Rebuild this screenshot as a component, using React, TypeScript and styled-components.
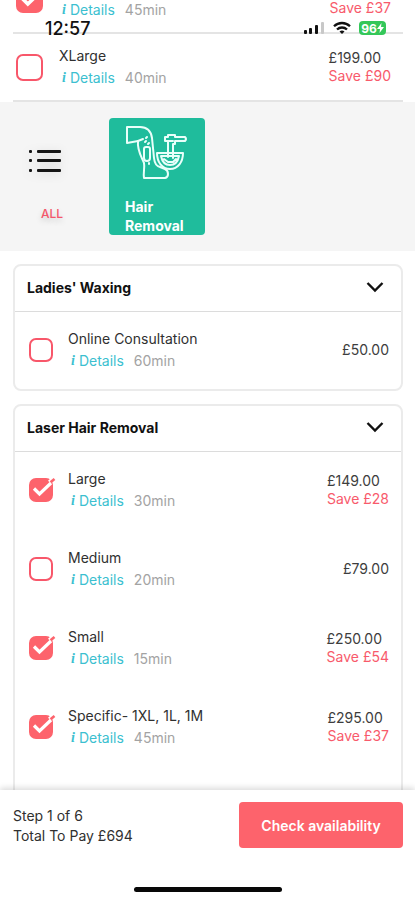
import React, { useState } from "react";
import styled, { createGlobalStyle } from "styled-components";

const coral = "#fd636c";
const line = "#e4e4e4";

const GlobalStyle = createGlobalStyle`
  * { box-sizing: border-box; }
  body {
    margin: 0;
    background: #fff;
    color: #2b2b2b;
    font-family: Inter, "Noto Sans", sans-serif;
    font-size: 14px;
  }
  button, input { font: inherit; margin: 0; }
`;

const Shell = styled.div`
  position: relative;
  display: flex;
  flex-direction: column;
  height: 100vh;
  overflow: hidden;
`;

const StatusBar = styled.div`
  position: absolute;
  z-index: 2;
  top: 18px;
  left: 0;
  right: 0;
  display: flex;
  justify-content: space-between;
  align-items: center;
  height: 20px;
  padding: 0 29px 0 45px;
  color: #111;
  pointer-events: none;
`;

const Clock = styled.time`
  font-size: 18px;
  font-weight: 500;
`;

const Indicators = styled.div`
  display: flex;
  align-items: center;
  gap: 8px;
  svg { display: block; }
`;

const Battery = styled.span`
  display: flex;
  align-items: center;
  justify-content: center;
  width: 27px;
  height: 14px;
  border-radius: 4px;
  background: #34c759;
  color: #fff;
  font-size: 12px;
  font-weight: 700;
`;

const Scroller = styled.main`
  flex: 1;
  min-height: 0;
  overflow-y: auto;
  scrollbar-width: none;
`;

const TopList = styled.ul`
  list-style: none;
  margin: -34px 0 0;
  padding: 0 0 0 13px;
`;

const TopItem = styled.li`
  margin-right: 12px;
  border-bottom: 2px solid ${line};
`;

const ServiceRow = styled.div<{ $inset?: boolean }>`
  display: flex;
  align-items: center;
  min-height: ${(p) => (p.$inset ? 79 : 66)}px;
  padding: ${(p) => (p.$inset ? "0 14px 3px 16px" : "0 12px 0 3px")};
`;

const Tick = styled.span<{ $size: number }>`
  display: grid;
  flex: none;
  width: ${(p) => p.$size}px;
  height: ${(p) => p.$size}px;
  svg, input { grid-area: 1 / 1; width: 100%; height: 100%; }
  svg { pointer-events: none; overflow: visible; }
`;

const TickInput = styled.input`
  appearance: none;
  border: 2px solid #f8576a;
  border-radius: 7px;
  background: #fff;
  cursor: pointer;
  &:checked { background: ${coral}; border-color: ${coral}; }
`;

const Info = styled.div<{ $inset?: boolean }>`
  flex: 1;
  margin-left: ${(p) => (p.$inset ? 15 : 16)}px;
`;

const Name = styled.label`
  display: block;
  line-height: 22px;
  color: #303030;
`;

const Meta = styled.div`
  display: flex;
  gap: 10px;
  padding-left: 3px;
  line-height: 22px;
  color: #a3a3a3;
`;

const Details = styled.a`
  display: flex;
  gap: 4px;
  color: #3cbfd0;
  text-decoration: none;
  i { font: italic 700 14px/22px "Liberation Serif", serif; }
`;

const Cost = styled.div`
  line-height: 18px;
  color: #3d3d3d;
`;

const Saving = styled.div`
  color: #f85a6b;
`;

const Categories = styled.nav`
  display: flex;
  align-items: center;
  gap: 44px;
  height: 149px;
  padding: 0 26px;
  background: #f5f5f5;
`;

const AllButton = styled.button`
  display: flex;
  flex-direction: column;
  align-items: center;
  gap: 32px;
  width: 39px;
  padding: 18px 0 0;
  border: 0;
  background: none;
  color: #f4566b;
  font-size: 12px;
  font-weight: 500;
  line-height: 18px;
  white-space: nowrap;
  svg { display: block; filter: drop-shadow(0 2px 5px rgba(0, 0, 0, 0.14)); }
  span { margin-left: 13px; text-shadow: 0 3px 6px rgba(0, 0, 0, 0.2); }
`;

const CategoryTile = styled.button`
  display: flex;
  flex-direction: column;
  justify-content: space-between;
  align-items: flex-start;
  width: 96px;
  height: 117px;
  padding: 7px 8px 0 16px;
  border: 0;
  border-radius: 4px;
  background: #1fbc9c;
  color: #fff;
  font-weight: 700;
  line-height: 19px;
  text-align: left;
`;

const Groups = styled.div`
  display: flex;
  flex-direction: column;
  gap: 13px;
  padding: 13px 12px 24px 13px;
`;

const Group = styled.section`
  border: 2px solid #ebebeb;
  border-radius: 8px;
`;

const GroupHeader = styled.button`
  display: flex;
  justify-content: space-between;
  align-items: center;
  width: 100%;
  height: 46px;
  padding: 0 17px 3px 12px;
  border: 0;
  border-bottom: 1px solid #dcdcdc;
  background: none;
  color: #111;
  font-weight: 700;
`;

const GroupBody = styled.div<{ $extended?: boolean }>`
  margin: 0 -2px -2px;
  padding-bottom: ${(p) => (p.$extended ? 32 : 0)}px;
`;

const Footer = styled.footer`
  position: relative;
  flex: none;
  padding: 12px 12px 8px 13px;
  background: #fff;
  box-shadow: 0 -2px 6px rgba(0, 0, 0, 0.15);
`;

const FooterRow = styled.div`
  display: flex;
  align-items: center;
  justify-content: space-between;
`;

const Summary = styled.div`
  padding-top: 2px;
  line-height: 20px;
  color: #303030;
`;

const CheckButton = styled.button`
  width: 164px;
  height: 46px;
  border: 0;
  border-radius: 4px;
  background: ${coral};
  color: #fff;
  font-weight: 600;
`;

const HomeIndicator = styled.div`
  width: 148px;
  height: 5px;
  margin: 39px auto 0;
  border-radius: 3px;
  background: #080808;
`;

type Service = { id: string; name: string; time: string; price: string; save?: string; on?: boolean };

const topServices: Service[] = [
  { id: "top-specific", name: "Specific- 1XL, 1L, 1M", time: "45min", price: "£295.00", save: "Save £37", on: true },
  { id: "top-xlarge", name: "XLarge", time: "40min", price: "£199.00", save: "Save £90" },
];

const groups: { title: string; services: Service[]; extended?: boolean }[] = [
  { title: "Ladies' Waxing", services: [{ id: "consult", name: "Online Consultation", time: "60min", price: "£50.00" }] },
  {
    title: "Laser Hair Removal",
    extended: true,
    services: [
      { id: "large", name: "Large", time: "30min", price: "£149.00", save: "Save £28", on: true },
      { id: "medium", name: "Medium", time: "20min", price: "£79.00" },
      { id: "small", name: "Small", time: "15min", price: "£250.00", save: "Save £54", on: true },
      { id: "specific", name: "Specific- 1XL, 1L, 1M", time: "45min", price: "£295.00", save: "Save £37", on: true },
    ],
  },
];

function Row({ service, inset }: { service: Service; inset?: boolean }) {
  const [on, setOn] = useState(!!service.on);
  return (
    <ServiceRow $inset={inset}>
      <Tick $size={inset ? 24 : 27}>
        <TickInput id={service.id} type="checkbox" checked={on} onChange={() => setOn(!on)} />
        {on && (
          <svg viewBox="0 0 24 24" fill="none" aria-hidden="true">
            <path d="M5 10.5l5.500 5.500L22 5" stroke="#fff" strokeWidth="3.200" />
            <path d="M19 2.800L22 0h3v3l-3 2.500z" fill="#fff" />
            <path d="M21.500 4.300L25.500 1" stroke={coral} strokeWidth="2.600" />
          </svg>
        )}
      </Tick>
      <Info $inset={inset}>
        <Name htmlFor={service.id}>{service.name}</Name>
        <Meta>
          <Details href="#details"><i>i</i>Details</Details>
          <span>{service.time}</span>
        </Meta>
      </Info>
      <Cost>
        {service.price}
        {service.save && <Saving>{service.save}</Saving>}
      </Cost>
    </ServiceRow>
  );
}

const HairRemovalIcon = () => (
  <svg width="63" height="56" viewBox="0 0 63 56" fill="none" stroke="#e9fffa" strokeWidth="2" strokeLinejoin="round" strokeLinecap="round" aria-hidden="true">
    <path d="M2 2h13c7 0 11 4 12 11l2 20c.5 5 2 8 6 9l5 2c4 2 4 8 0 9H19c-1-5 1-10 0-15C16 31 12 25 13 16l-11 2z" />
    <path d="M13 16l5-2M19 24q0-2 2-2h2q2 0 2 2v9q0 3-3 3t-3-3zM20 17l1-1M23 19l1-1M21 13l1-1M24 38v1" />
    <path d="M32 28h26c0 9-5 16-13 16S32 37 32 28z" />
    <path d="M36 31h18c-1 5-4 9-9 9s-8-4-9-9zM39 34l4 3h5l3-3" />
    <path d="M43 32V16h-3v-4h3v-2h7v2h10q2 2 0 4H50v3h-2v14" />
    <path d="M43 16h5" />
  </svg>
);

export default function App() {
  return (
    <>
      <GlobalStyle />
      <Shell>
        <StatusBar>
          <Clock>12:57</Clock>
          <Indicators>
            <svg width="21" height="14" viewBox="0 0 21 14" aria-hidden="true">
              <rect x="0" y="9" width="3" height="4" rx="1" fill="#111" />
              <rect x="5" y="7" width="3" height="6" rx="1" fill="#111" />
              <rect x="11" y="4" width="3" height="9" rx="1" fill="#111" />
              <rect x="17" y="1" width="3" height="12" rx="1" fill="#c8c8c8" />
            </svg>
            <svg width="18" height="14" viewBox="0 0 18 14" fill="none" stroke="#111" strokeWidth="2.3" aria-hidden="true">
              <path d="M1 5.3c4.500-4.400 11.500-4.400 16 0M4 8.500c2.800-2.700 7.200-2.700 10 0" />
              <path d="M6.500 10.500q2.500-2 5 0L9 13z" fill="#111" stroke="none" />
            </svg>
            <Battery>
              96
              <svg width="7" height="10" viewBox="0 0 7 10" fill="#fff" aria-hidden="true"><path d="M4.500 0L0 6h3l-.5 4L7 4H4z" /></svg>
            </Battery>
          </Indicators>
        </StatusBar>
        <Scroller>
          <TopList>
            {topServices.map((s) => (
              <TopItem key={s.id}><Row service={s} /></TopItem>
            ))}
          </TopList>
          <Categories aria-label="Categories">
            <AllButton>
              <svg width="39" height="24" viewBox="0 0 39 24" aria-hidden="true">
                {[1, 10, 20].map((y) => (
                  <g key={y} fill="#151515">
                    <rect x="3" y={y} width="3" height="3" rx="1" />
                    <rect x="11" y={y} width="24" height="3" rx="1" />
                  </g>
                ))}
              </svg>
              <span>ALL</span>
            </AllButton>
            <CategoryTile>
              <HairRemovalIcon />
              <span>Hair<br />Removal</span>
            </CategoryTile>
          </Categories>
          <Groups>
            {groups.map((g) => (
              <Group key={g.title}>
                <GroupHeader aria-expanded="true">
                  {g.title}
                  <svg width="18" height="12" viewBox="0 0 18 12" fill="none" stroke="#111" strokeWidth="2.400" aria-hidden="true">
                    <path d="M1.500 2L9 9.500 16.500 2" />
                  </svg>
                </GroupHeader>
                <GroupBody $extended={g.extended}>
                  {g.services.map((s) => <Row key={s.id} service={s} inset />)}
                </GroupBody>
              </Group>
            ))}
          </Groups>
        </Scroller>
        <Footer>
          <FooterRow>
            <Summary>
              <div>Step 1 of 6</div>
              <div>Total To Pay £694</div>
            </Summary>
            <CheckButton>Check availability</CheckButton>
          </FooterRow>
          <HomeIndicator />
        </Footer>
      </Shell>
    </>
  );
}
